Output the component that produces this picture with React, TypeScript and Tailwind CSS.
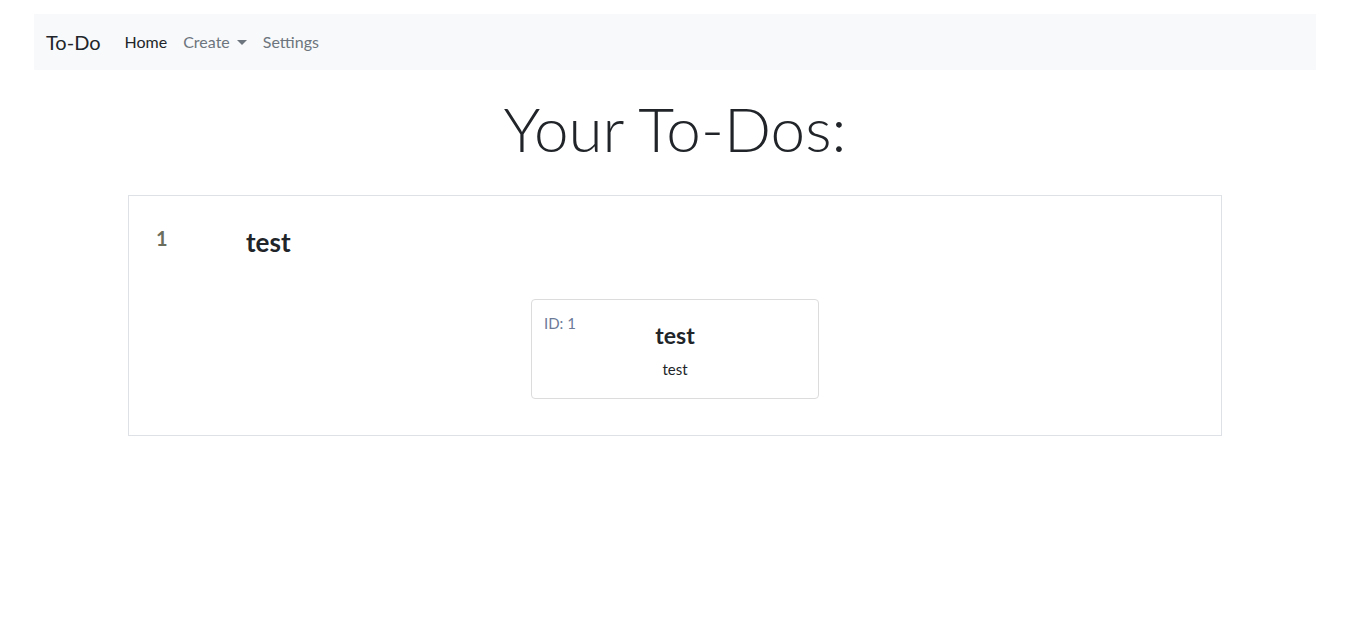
export default function App() {
  return (
    <div className="min-h-screen bg-white text-[#212529]" style={{ fontFamily: 'Lato, "Open Sans", sans-serif' }}>
      <div className="px-[34px] pt-[14px]">
        {/* Navbar */}
        <nav className="flex h-[56px] items-center bg-[#f8f9fa] px-[12px]">
          <span className="mr-[16px] text-[20px] leading-[30px] text-[#212529]">To-Do</span>
          <div className="flex items-center text-[16px]">
            <span className="px-[8px] text-[#212529]">Home</span>
            <span className="flex items-center px-[8px] text-[#6c757d]">
              Create
              <span className="ml-[7px] inline-block h-0 w-0 border-x-[5px] border-t-[5px] border-x-transparent border-t-[#6c757d]" />
            </span>
            <span className="px-[8px] text-[#6c757d]">Settings</span>
          </div>
        </nav>
      </div>

      <h1 className="mt-[21px] text-center text-[62px] font-light leading-[1.2]">Your To-Dos:</h1>

      <div className="mx-auto mt-[30px] w-[1094px] border border-[#dee2e6] px-[27px] pb-[36px] pt-[30px]">
        <div className="flex items-start">
          <span className="w-[90px] text-[20px] font-bold leading-[24px] text-[#6c6e5d]">1</span>
          <span className="mt-[1px] text-[26px] font-bold leading-[30px]">test</span>
        </div>
        <div className="mt-[42px] flex justify-center">
          <div className="relative h-[100px] w-[288px] rounded-[4px] border border-[#dcdcdc] pt-[20px] text-center">
            <span className="absolute left-[12px] top-[12px] text-[15px] text-[#6c7a98]">ID: 1</span>
            <div className="text-[23px] font-bold leading-[30px]">test</div>
            <div className="mt-[9px] text-[15px] leading-[20px]">test</div>
          </div>
        </div>
      </div>
    </div>
  );
}
